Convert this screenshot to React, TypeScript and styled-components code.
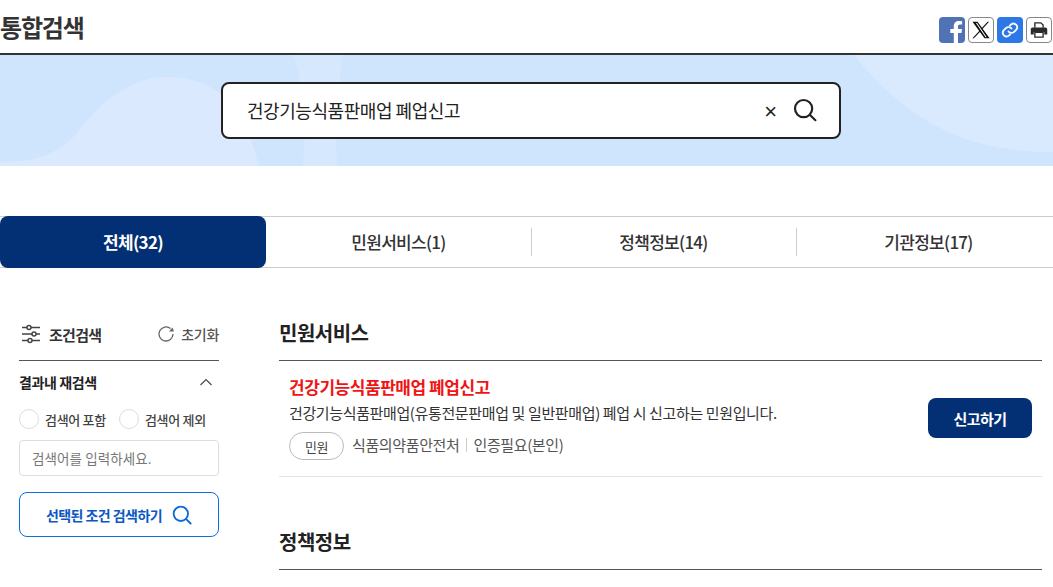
import React from "react";
import styled, { createGlobalStyle } from "styled-components";

const GlobalStyle = createGlobalStyle`
  html, body {
    margin: 0;
    padding: 0;
    background: #fff;
    overflow: hidden;
    font-family: "Noto Sans CJK KR", "Noto Sans", sans-serif;
    color: #222;
  }
  * { box-sizing: border-box; }
`;

const tabs = [
  { label: "전체(32)", active: true },
  { label: "민원서비스(1)" },
  { label: "정책정보(14)" },
  { label: "기관정보(17)" },
];

const SearchIcon = ({ size, color }: { size: number; color: string }) => (
  <svg width={size} height={size} viewBox="0 0 24 24" fill="none" stroke={color} strokeWidth="2.2" strokeLinecap="round">
    <circle cx="10.6" cy="10.6" r="8.6" />
    <path d="M17 17l5.4 5.2" />
  </svg>
);

export default function App() {
  return (
    <Page>
      <GlobalStyle />
      <TitleBar>
        <PageTitle>통합검색</PageTitle>
        <ShareList>
          <ShareFacebook aria-label="facebook">
            <svg width="26" height="26" viewBox="0 0 26 26">
              <path fill="#fff" d="M19 26v-10h3.500l.5-4h-4v-2.400c0-1.200.4-2 2-2h2.100V4.200c-.4 0-1.600-.2-3.100-.2-3.100 0-5.200 1.900-5.200 5.300V12h-3.500v4h3.500v10z" />
            </svg>
          </ShareFacebook>
          <ShareOutline aria-label="x">
            <svg width="18" height="18" viewBox="0 0 24 24">
              <path fill="#111" d="M14.200 10.300 22.800 1h-2l-7.500 8.100L7.400 1H.6l9 12.400L.6 23h2l7.900-8.500 6.200 8.500h6.800zm-9-7.800h1.500l12.900 19h-1.500z" />
            </svg>
          </ShareOutline>
          <ShareLink aria-label="link">
            <svg width="18" height="18" viewBox="0 0 24 24" fill="none" stroke="#fff" strokeWidth="2.400" strokeLinecap="round" strokeLinejoin="round">
              <path d="M10 14a5 5 0 0 0 7.500.5l3-3a5 5 0 0 0-7-7l-1.700 1.700" />
              <path d="M14 10a5 5 0 0 0-7.500-.5l-3 3a5 5 0 0 0 7 7l1.700-1.700" />
            </svg>
          </ShareLink>
          <ShareOutline aria-label="print">
            <svg width="18" height="18" viewBox="0 0 24 24">
              <path fill="none" stroke="#2b2b2b" strokeWidth="1.800" d="M6.500 9V2.500h8l3 3V9" />
              <path fill="#2b2b2b" d="M3.500 8.500h17A2.500 2.500 0 0 1 23 11v7h-4v-3.500H5V18H1v-7a2.500 2.500 0 0 1 2.500-2.500z" />
              <path fill="none" stroke="#2b2b2b" strokeWidth="1.800" d="M6.500 15v6.500h11V15z" />
            </svg>
          </ShareOutline>
        </ShareList>
      </TitleBar>

      <Hero>
        <HeroArt viewBox="0 0 1053 111" preserveAspectRatio="none" aria-hidden="true">
          <path fill="#dae9fe" d="M0 107C40 107 62 96 77 78 92 60 100 50 118 38 135 27 150 22 165 22c22 0 40 4 60 20 16 14 26 40 34 69H0z" />
          <path fill="#d5e8fe" d="M293 0h50c-6 35-8 75-6 111h-34C306 70 304 30 293 0z" />
          <path fill="#d9e9fe" d="M854 0h199v97c-30 0-60-3-90-14-45-17-80-46-109-83z" />
        </HeroArt>
        <SearchBox>
          <SearchText>건강기능식품판매업 폐업신고</SearchText>
          <ClearMark>×</ClearMark>
          <SearchIcon size={24} color="#222" />
        </SearchBox>
      </Hero>

      <TabBar>
        {tabs.map((tab, i) => (
          <Tab key={tab.label} $active={tab.active} $divider={i > 1}>
            {tab.label}
          </Tab>
        ))}
      </TabBar>

      <Content>
        <Sidebar>
          <FilterHead>
            <FilterTitle>
              <svg width="20" height="20" viewBox="0 0 20 20" fill="none" stroke="#444" strokeWidth="1.500">
                <path d="M1 3.500h5M10 3.500h9M1 10h10M15 10h4M1 16.500h6M11 16.500h8" />
                <circle cx="8" cy="3.500" r="2" />
                <circle cx="13" cy="10" r="2" />
                <circle cx="9" cy="16.500" r="2" />
              </svg>
              조건검색
            </FilterTitle>
            <ResetButton>
              <svg width="18" height="18" viewBox="0 0 18 18" fill="none">
                <path d="M16 9A7 7 0 1 1 13.500 3.600" stroke="#666" strokeWidth="1.300" />
                <path d="M12 6.500h5L15.500 2.500z" fill="#666" />
              </svg>
              초기화
            </ResetButton>
          </FilterHead>
          <FilterSection>
            <SectionHead>
              결과내 재검색
              <svg width="14" height="8" viewBox="0 0 14 8" fill="none" stroke="#444" strokeWidth="1.100">
                <path d="M1.500 7 7 1.500 12.500 7" />
              </svg>
            </SectionHead>
            <RadioRow>
              <RadioLabel><RadioDot />검색어 포함</RadioLabel>
              <RadioLabel><RadioDot />검색어 제외</RadioLabel>
            </RadioRow>
            <KeywordInput readOnly placeholder="검색어를 입력하세요." />
            <ApplyButton>
              선택된 조건 검색하기
              <SearchIcon size={20} color="#0b6bd6" />
            </ApplyButton>
          </FilterSection>
        </Sidebar>

        <Results>
          <GroupTitle>민원서비스</GroupTitle>
          <ResultRow>
            <ResultBody>
              <ResultTitle>건강기능식품판매업 폐업신고</ResultTitle>
              <ResultDesc>건강기능식품판매업(유통전문판매업 및 일반판매업) 폐업 시 신고하는 민원입니다.</ResultDesc>
              <MetaRow>
                <Chip>민원</Chip>
                <MetaItem>식품의약품안전처</MetaItem>
                <MetaDivider />
                <MetaItem>인증필요(본인)</MetaItem>
              </MetaRow>
            </ResultBody>
            <ApplyLink>신고하기</ApplyLink>
          </ResultRow>
          <PolicyTitle>정책정보</PolicyTitle>
        </Results>
      </Content>
    </Page>
  );
}

// styled-components

const Page = styled.div`
  width: 1053px;
  height: 587px;
  overflow: hidden;
`;

const TitleBar = styled.header`
  height: 55px;
  border-bottom: 2px solid #333;
  display: flex;
  align-items: flex-start;
  justify-content: space-between;
  padding-right: 1px;
`;

const PageTitle = styled.h1`
  margin: 9px 0 0;
  font-size: 24px;
  line-height: 36px;
  font-weight: 700;
  letter-spacing: -1.2px;
  color: #333;
`;

const ShareList = styled.div`
  display: flex;
  gap: 3px;
  margin-top: 17px;
`;

const ShareBase = styled.span`
  width: 26px;
  height: 26px;
  border-radius: 4px;
  display: flex;
  align-items: center;
  justify-content: center;
  overflow: hidden;
`;

const ShareFacebook = styled(ShareBase)`
  background: #5173b5;
`;

const ShareOutline = styled(ShareBase)`
  background: #fff;
  border: 1px solid #888;
`;

const ShareLink = styled(ShareBase)`
  background: #2d78e6;
`;

const Hero = styled.section`
  position: relative;
  height: 111px;
  background: #cfe5fe;
  display: flex;
  align-items: center;
  justify-content: center;
  padding: 0 212px 0 221px;
`;

const HeroArt = styled.svg`
  position: absolute;
  inset: 0;
  width: 100%;
  height: 100%;
`;

const SearchBox = styled.div`
  position: relative;
  width: 620px;
  height: 57px;
  margin-bottom: 1px;
  background: #fff;
  border: 2px solid #222;
  border-radius: 8px;
  display: flex;
  align-items: center;
  padding: 0 22px 0 24px;
`;

const SearchText = styled.span`
  flex: 1;
  margin-bottom: 1px;
  font-size: 18px;
  letter-spacing: -0.45px;
  color: #222;
`;

const ClearMark = styled.span`
  margin: 3px 16px 0 0;
  font-family: "Liberation Sans", sans-serif;
  font-size: 22px;
  line-height: 22px;
  color: #222;
`;

const TabBar = styled.nav`
  display: grid;
  grid-template-columns: 266px 265px 265px 265px;
  margin-top: 50px;
  height: 52px;
  border-top: 1px solid #ccc;
  border-bottom: 1px solid #ccc;
`;

const Tab = styled.div<{ $active?: boolean; $divider?: boolean }>`
  position: relative;
  display: flex;
  align-items: center;
  justify-content: center;
  margin: ${(p) => (p.$active ? "-1px 0" : "0")};
  padding-bottom: 1px;
  font-size: 17px;
  font-weight: ${(p) => (p.$active ? 700 : 500)};
  letter-spacing: -0.7px;
  color: ${(p) => (p.$active ? "#fff" : "#333")};
  background: ${(p) => (p.$active ? "#033075" : "transparent")};
  border-radius: ${(p) => (p.$active ? "8px" : "0")};

  &::before {
    content: "";
    display: ${(p) => (p.$divider ? "block" : "none")};
    position: absolute;
    left: 0;
    top: 11px;
    height: 28px;
    width: 1px;
    background: #ccc;
  }
`;

const Content = styled.div`
  display: grid;
  grid-template-columns: 200px 763px;
  column-gap: 60px;
  padding: 50px 0 0 19px;
`;

const Sidebar = styled.aside`
  display: flex;
  flex-direction: column;
`;

const FilterHead = styled.div`
  height: 43px;
  border-bottom: 1px solid #555;
  display: flex;
  align-items: center;
  justify-content: space-between;
  padding-bottom: 10px;
`;

const FilterTitle = styled.div`
  display: flex;
  align-items: center;
  gap: 8px;
  margin-left: 2px;
  font-size: 15px;
  font-weight: 700;
  letter-spacing: -0.7px;
  color: #333;
`;

const ResetButton = styled.div`
  display: flex;
  align-items: center;
  gap: 6px;
  font-size: 14px;
  font-weight: 500;
  letter-spacing: -0.3px;
  color: #555;
`;

const FilterSection = styled.div`
  display: flex;
  flex-direction: column;
`;

const SectionHead = styled.div`
  height: 42px;
  display: flex;
  align-items: center;
  justify-content: space-between;
  padding-right: 6px;
  font-size: 14px;
  font-weight: 700;
  letter-spacing: -0.4px;
  color: #222;
`;

const RadioRow = styled.div`
  display: flex;
  gap: 13px;
  height: 32px;
  align-items: center;
`;

const RadioLabel = styled.label`
  display: flex;
  align-items: center;
  gap: 6px;
  font-size: 13px;
  font-weight: 500;
  letter-spacing: -0.3px;
  color: #444;
`;

const RadioDot = styled.span`
  width: 20px;
  height: 20px;
  border: 1px solid #ddd;
  border-radius: 50%;
  background: #fff;
`;

const KeywordInput = styled.input`
  margin-top: 5px;
  width: 200px;
  height: 36px;
  padding: 0 12px;
  border: 1px solid #ddd;
  border-radius: 4px;
  font-family: inherit;
  font-size: 13.5px;
  letter-spacing: 0.1px;
  outline: none;

  &::placeholder {
    color: #777;
    opacity: 1;
  }
`;

const ApplyButton = styled.div`
  margin-top: 16px;
  height: 45px;
  border: 1px solid #0b6fe0;
  border-radius: 8px;
  display: flex;
  align-items: center;
  justify-content: center;
  gap: 10px;
  font-size: 14px;
  font-weight: 700;
  letter-spacing: -0.55px;
  color: #0b57c4;
`;

const Results = styled.main`
  display: flex;
  flex-direction: column;
`;

const GroupTitle = styled.h2`
  margin: 0;
  height: 43px;
  border-bottom: 1px solid #555;
  font-size: 20px;
  line-height: 30px;
  font-weight: 700;
  letter-spacing: -0.5px;
  color: #222;
`;

const PolicyTitle = styled(GroupTitle)`
  margin-top: 50px;
`;

const ResultRow = styled.div`
  display: flex;
  align-items: center;
  justify-content: space-between;
  height: 116px;
  padding: 0 10px 1px;
  border-bottom: 1px solid #e2e2e2;
`;

const ResultBody = styled.div`
  display: flex;
  flex-direction: column;
  align-self: flex-start;
  margin-top: 14px;
`;

const ResultTitle = styled.div`
  margin-bottom: 3px;
  font-size: 17px;
  line-height: 24px;
  font-weight: 700;
  letter-spacing: -0.45px;
  color: #f01414;
`;

const ResultDesc = styled.div`
  font-size: 15px;
  line-height: 22px;
  letter-spacing: -0.37px;
  color: #333;
`;

const MetaRow = styled.div`
  display: flex;
  align-items: center;
  margin-top: 8px;
`;

const Chip = styled.span`
  width: 55px;
  height: 28px;
  border: 1px solid #bbb;
  border-radius: 14px;
  display: flex;
  align-items: center;
  justify-content: center;
  margin-right: 8px;
  font-size: 13px;
  letter-spacing: -0.4px;
  color: #444;
`;

const MetaItem = styled.span`
  margin-bottom: 3px;
  font-size: 15px;
  letter-spacing: -0.37px;
  color: #555;
`;

const MetaDivider = styled.span`
  width: 1px;
  height: 14px;
  margin: 0 6px 2px 7px;
  background: #ccc;
`;

const ApplyLink = styled.div`
  width: 104px;
  height: 40px;
  border-radius: 8px;
  background: #033075;
  color: #fff;
  display: flex;
  align-items: center;
  justify-content: center;
  font-size: 15px;
  font-weight: 700;
  letter-spacing: -0.55px;
`;
